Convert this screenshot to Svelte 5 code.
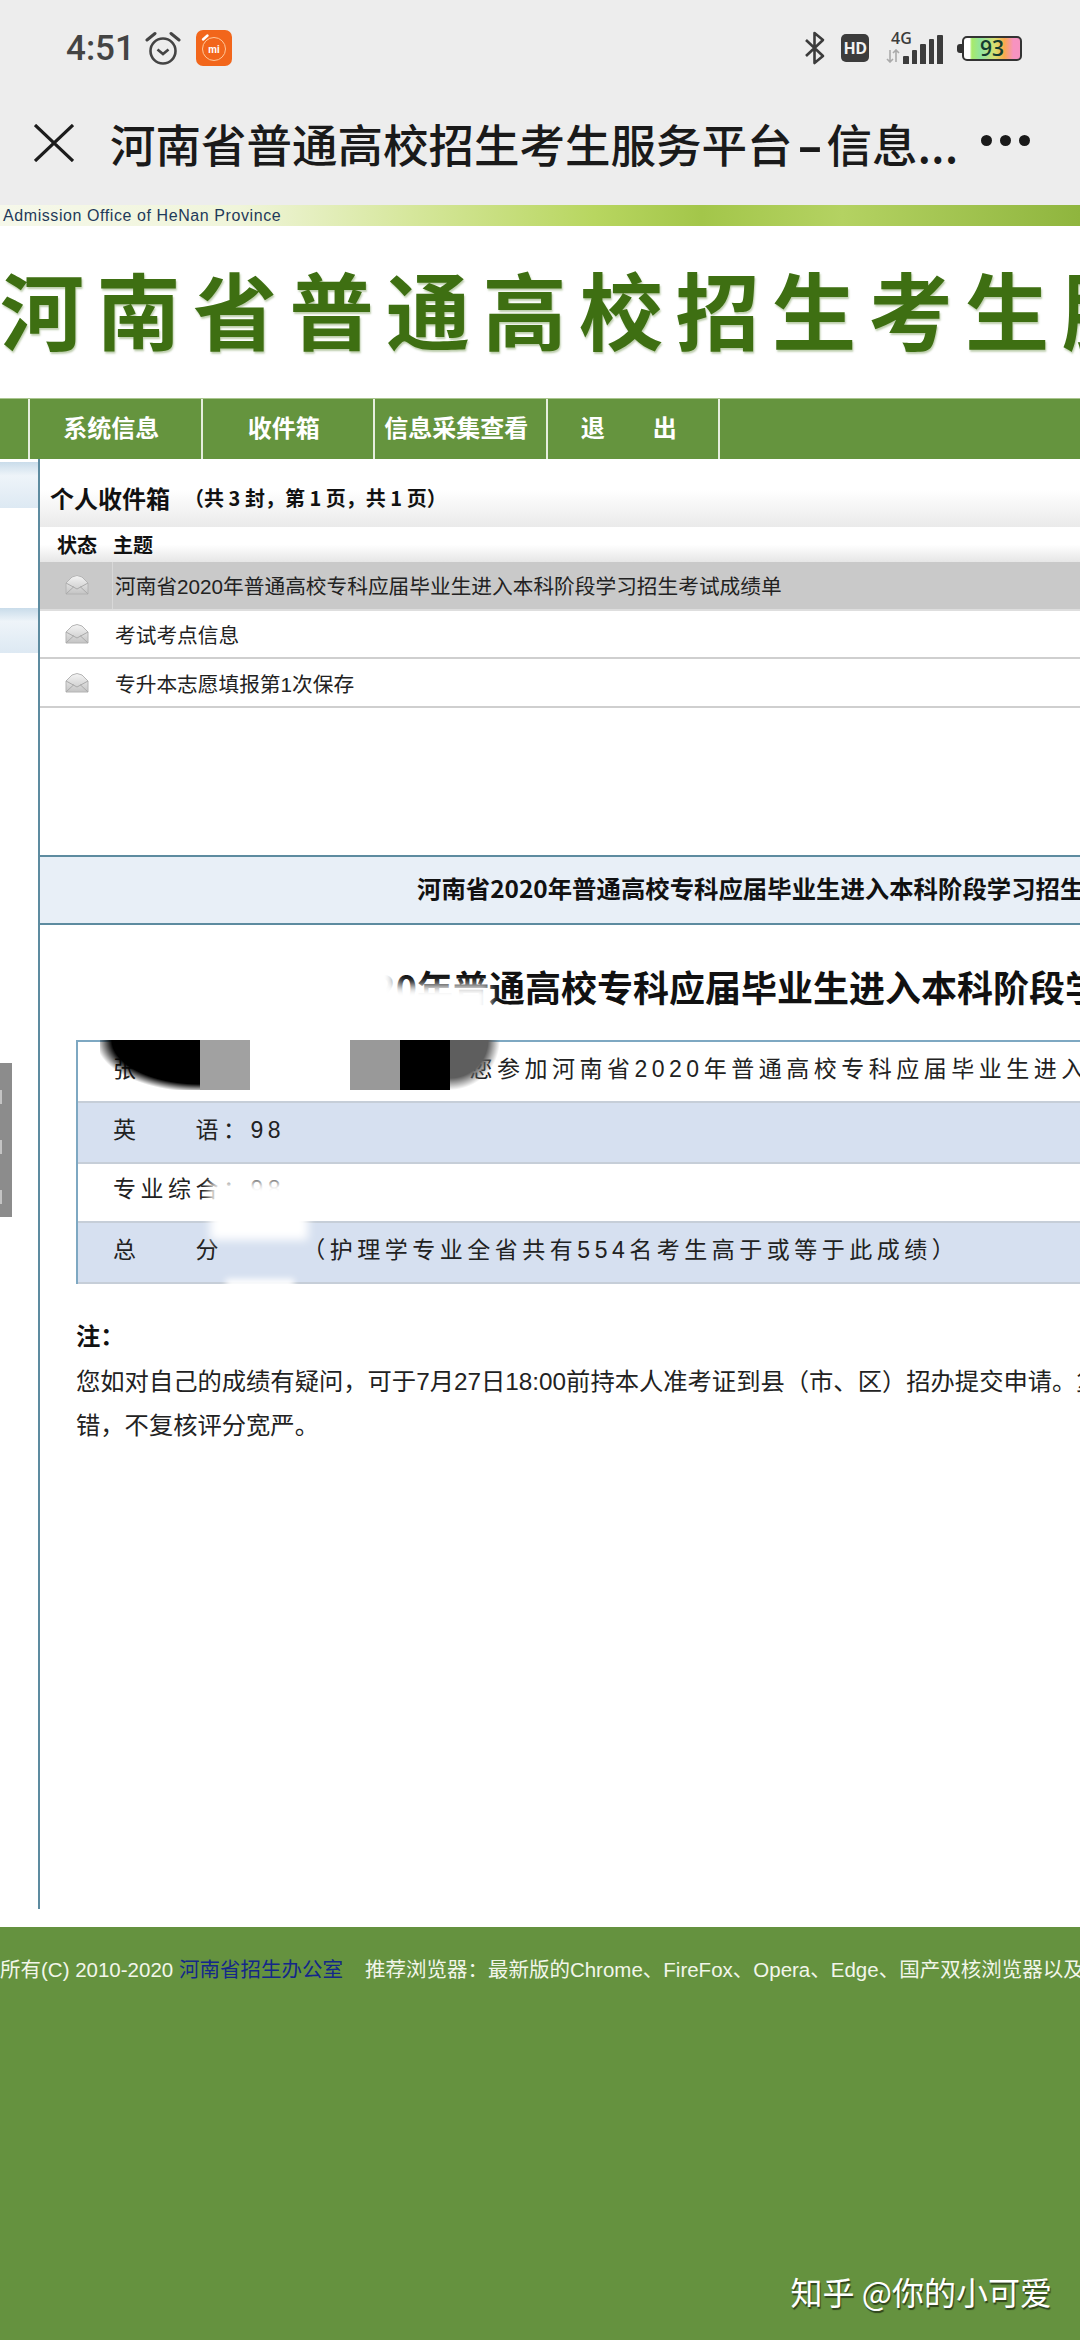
<script>
  const navItems = ["系统信息", "收件箱", "信息采集查看", "退\u3000\u3000出"];
  const mails = [
    { title: "河南省2020年普通高校专科应届毕业生进入本科阶段学习招生考试成绩单", active: true },
    { title: "考试考点信息", active: false },
    { title: "专升本志愿填报第1次保存", active: false }
  ];
  const censorCells = ["c-black-l", "c-grey", "c-white", "c-grey2", "c-black", "c-dark-r"];
  const bars = [8, 14, 20, 25, 29];
</script>

<div class="page">
  <div class="phone-top">
    <div class="status">
      <div class="status-left">
        <span class="time">4:51</span>
        <svg class="alarm" viewBox="0 0 36 34" width="36" height="34">
          <circle cx="18" cy="20" r="12.5" fill="none" stroke="#444" stroke-width="2.6" />
          <path d="M12.5 18.5 L18 23 L23.5 18.5" fill="none" stroke="#444" stroke-width="2.6" />
          <path d="M2 9 L10 2.5 M34 9 L26 2.5" stroke="#444" stroke-width="3" stroke-linecap="round" />
        </svg>
        <div class="mi">
          <svg viewBox="0 0 36 36" width="36" height="36">
            <circle cx="18" cy="19" r="11.5" fill="none" stroke="#ffc89a" stroke-width="1" />
            <path d="M7 9.5 L11.5 5.5" stroke="#fff" stroke-width="2.4" stroke-linecap="round" />
          </svg>
          <span class="mi-text">mi</span>
        </div>
      </div>
      <div class="status-right">
        <svg class="bt" viewBox="0 0 22 34" width="22" height="34">
          <path d="M2 9 L19 25 L10.5 32 V2 L19 9 L2 25" fill="none" stroke="#3c3c3c" stroke-width="2.6" stroke-linejoin="round" />
        </svg>
        <div class="hd">HD</div>
        <div class="signal">
          <span class="four-g">4G</span>
          <svg class="arrows" viewBox="0 0 14 14" width="14" height="14">
            <path d="M4 1 V13 M1 10 L4 13 L7 10 M10 13 V1 M7 4 L10 1 L13 4" fill="none" stroke="#aaa" stroke-width="1.6" />
          </svg>
          <div class="bars">
            {#each bars as h}
              <span class="bar" style="height: {h}px"></span>
            {/each}
          </div>
        </div>
        <div class="battery">
          <span class="tip"></span>
          <div class="cell"><span>93</span></div>
        </div>
      </div>
    </div>

    <div class="titlebar">
      <svg class="close" viewBox="0 0 40 38" width="40" height="38">
        <path d="M1 1 L39 37 M39 1 L1 37" stroke="#1c1c1c" stroke-width="3.2" />
      </svg>
      <span class="page-title">河南省普通高校招生考生服务平台<b class="dash">-</b>信息...</span>
      <div class="dots"><i></i><i></i><i></i></div>
    </div>
  </div>

  <div class="banner">Admission Office of HeNan Province</div>

  <div class="logo">河南省普通高校招生考生服务平台</div>

  <nav class="nav">
    <span class="nav-stub"></span>
    {#each navItems as item}
      <a class="nav-item" href="#top">{item}</a>
    {/each}
  </nav>

  <div class="body">
    <aside class="side">
      <div class="side-panel first"></div>
      <div class="side-panel second"></div>
    </aside>

    <main class="main">
      <div class="inbox-head">
        <span class="inbox-title">个人收件箱</span>
        <span class="inbox-count">&#xFF08;共 3 封&#xFF0C;第 1 页&#xFF0C;共 1 页&#xFF09;</span>
      </div>

      <div class="list-head">
        <span class="col-state">状态</span>
        <span>主题</span>
      </div>

      {#each mails as mail}
        <div class={mail.active ? "mail active" : "mail"}>
          <span class="mail-icon">
            <svg viewBox="0 0 24 20" width="24" height="20">
              <defs>
                <linearGradient id="env" x1="0" y1="0" x2="0" y2="1">
                  <stop offset="0" stop-color="#f4f4f4" />
                  <stop offset="1" stop-color="#c4c4c4" />
                </linearGradient>
              </defs>
              <path d="M1 8 L7 2 Q12 -1 17 2 L23 8 V19 H1 Z" fill="url(#env)" stroke="#b4b4b4" />
              <path d="M1 8 L12 14 L23 8 M1 19 L9 11.5 M23 19 L15 11.5" fill="none" stroke="#aaa" />
            </svg>
          </span>
          <span class="mail-title">{mail.title}</span>
        </div>
      {/each}

      <div class="detail-bar">河南省2020年普通高校专科应届毕业生进入本科阶段学习招生考试成绩单</div>

      <h2 class="heading">
        河南省2020年普通高校专科应届毕业生进入本科阶段学习招生考试成绩单
        <span class="wipe wipe-a"></span>
        <span class="wipe wipe-b"></span>
      </h2>

      <div class="score">
        <div class="score-row">张<span class="name-gap"></span>您参加河南省2020年普通高校专科应届毕业生进入本科阶段学习招生考试成绩如下</div>
        <div class="score-row tint">英&#x3000;&#x3000;语&#xFF1A;98</div>
        <div class="score-row short">专业综合&#xFF1A;98</div>
        <div class="score-row tint">总&#x3000;&#x3000;分&#xFF1A;196&#xFF08;护理学专业全省共有554名考生高于或等于此成绩&#xFF09;</div>

        <div class="censor">
          {#each censorCells as cell}
            <span class={cell}></span>
          {/each}
        </div>
        <span class="patch"></span>
        <span class="smudge"></span>
        <span class="smudge-low"></span>
      </div>

      <div class="note">
        <strong>注&#xFF1A;</strong>
        <p>您如对自己的成绩有疑问&#xFF0C;可于7月27日18:00前持本人准考证到县&#xFF08;市、区&#xFF09;招办提交申请。复核</p>
        <p>错&#xFF0C;不复核评分宽严。</p>
      </div>
    </main>
  </div>

  <footer class="footer">
    <p class="copy">所有(C) 2010-2020 <a href="#top">河南省招生办公室</a><span class="browsers">推荐浏览器&#xFF1A;最新版的Chrome、FireFox、Opera、Edge、国产双核浏览器以及IE</span></p>
    <div class="watermark">知乎 @你的小可爱</div>
  </footer>

  <div class="float-tab"><i></i><i></i><i></i></div>
</div>

<style>
  :global(body) {
    margin: 0;
    background: #fff;
  }

  .page {
    position: relative;
    width: 1080px;
    height: 2340px;
    overflow: hidden;
    font-family: "Liberation Sans", "Noto Sans CJK SC", sans-serif;
    color: #111;
    background: #fff;
  }

  .phone-top {
    background: #ededed;
    height: 205px;
    display: flex;
    flex-direction: column;
  }

  .status {
    height: 96px;
    display: flex;
    justify-content: space-between;
    align-items: center;
    padding: 0 58px 0 66px;
  }

  .status-left {
    display: flex;
    align-items: center;
    gap: 15px;
  }

  .time {
    font-family: Roboto, sans-serif;
    font-size: 35px;
    font-weight: 500;
    color: #444;
    width: 64px;
  }

  .mi {
    position: relative;
    width: 36px;
    height: 36px;
    border-radius: 7px;
    background: #f2661b;
  }

  .mi svg {
    display: block;
  }

  .mi-text {
    position: absolute;
    inset: 0;
    display: flex;
    align-items: center;
    justify-content: center;
    padding-top: 2px;
    font-family: Roboto, sans-serif;
    font-size: 10px;
    font-weight: 700;
    color: #fff;
  }

  .status-right {
    display: flex;
    align-items: center;
  }

  .bt {
    margin-right: 15px;
  }

  .hd {
    width: 28px;
    height: 28px;
    border-radius: 5px;
    background: #3c3c3c;
    color: #f2f2f2;
    font-family: "Open Sans", sans-serif;
    font-size: 16px;
    font-weight: 700;
    line-height: 28px;
    text-align: center;
    letter-spacing: -0.5px;
    margin-right: 17px;
  }

  .signal {
    position: relative;
    width: 57px;
    height: 32px;
    margin-right: 14px;
  }

  .four-g {
    position: absolute;
    left: 5px;
    top: -2px;
    font-family: "Open Sans", sans-serif;
    font-size: 16px;
    font-weight: 600;
    color: #3c3c3c;
    line-height: 16px;
  }

  .arrows {
    position: absolute;
    left: 0;
    bottom: 1px;
  }

  .bars {
    position: absolute;
    left: 17px;
    bottom: 0;
    display: flex;
    align-items: flex-end;
    gap: 3px;
  }

  .bar {
    width: 5.5px;
    background: #3c3c3c;
    border-radius: 1px 1px 0 0;
  }

  .battery {
    display: flex;
    align-items: center;
  }

  .tip {
    width: 5px;
    height: 9px;
    background: #333;
    border-radius: 3px 0 0 3px;
  }

  .cell {
    width: 60px;
    height: 25px;
    box-sizing: border-box;
    border: 2px solid #333;
    border-radius: 5px;
    background: linear-gradient(to right, #fff 0 10%, #a8ea6a 14%, #8fe5a0 30%, #d8e070 55%, #f9a94c 72%, #f793c0 88%);
    display: flex;
    align-items: center;
    justify-content: center;
    font-family: "Open Sans", sans-serif;
    font-size: 21px;
    font-weight: 600;
    color: #143c30;
  }

  .titlebar {
    position: relative;
    flex: 1;
    display: flex;
    align-items: center;
    padding: 0 0 15px 34px;
  }

  .page-title {
    margin-left: 36px;
    font-family: "Noto Sans CJK SC", sans-serif;
    font-size: 45.5px;
    font-weight: 500;
    color: #1a1a1a;
    white-space: nowrap;
  }

  .dash {
    display: inline-block;
    width: 34px;
    text-align: center;
    font-weight: 700;
    transform: scaleX(1.6);
  }

  .dots {
    position: absolute;
    left: 981px;
    top: 39px;
    display: flex;
    gap: 8px;
  }

  .dots i {
    width: 11px;
    height: 11px;
    border-radius: 50%;
    background: #1a1a1a;
  }

  .banner {
    height: 21px;
    padding-left: 3px;
    font-size: 16px;
    line-height: 21px;
    letter-spacing: 0.58px;
    color: #1f3a5a;
    white-space: nowrap;
    background: linear-gradient(to right, #f6f8ea 0, #f0f5da 22%, #d6e79c 38%, #b8d660 55%, #a3c64a 65%, #b4d262 78%, #8fb53e 100%);
  }

  .logo {
    height: 172px;
    box-sizing: border-box;
    padding-bottom: 8px;
    line-height: 164px;
    font-family: "Noto Sans CJK SC", sans-serif;
    font-size: 84px;
    font-weight: 700;
    letter-spacing: 12.5px;
    color: #3e6f12;
    white-space: nowrap;
    text-shadow: 1px 2px 2px rgba(62, 111, 18, 0.35);
  }

  .nav {
    height: 61px;
    background: #65943e;
    display: flex;
    box-sizing: border-box;
    border-top: 1px solid #a9c58f;
  }

  .nav-stub {
    width: 28px;
    border-right: 2px solid #e6eedd;
  }

  .nav-item {
    box-sizing: border-box;
    width: 172.5px;
    padding: 0 8px 6px 0;
    border-right: 2px solid #e6eedd;
    display: flex;
    align-items: center;
    justify-content: center;
    font-family: "Noto Sans CJK SC", sans-serif;
    font-size: 24px;
    font-weight: 700;
    color: #fff;
    text-decoration: none;
    white-space: nowrap;
  }

  .body {
    display: flex;
    height: 1450px;
  }

  .side {
    width: 38px;
    flex: none;
  }

  .side-panel {
    width: 38px;
    background: linear-gradient(to bottom, #c9dcea, #eef4f9 30%, #dde9f3);
  }

  .first {
    height: 46px;
    margin-top: 3px;
  }

  .second {
    height: 45px;
    margin-top: 100px;
  }

  .main {
    flex: 1;
    min-width: 0;
    border-left: 2px solid #5d8ba0;
  }

  .inbox-head {
    height: 68px;
    box-sizing: border-box;
    padding: 8px 0 0 10px;
    display: flex;
    align-items: center;
    gap: 14px;
    font-family: "Noto Sans CJK SC", sans-serif;
    font-weight: 700;
    background: linear-gradient(to bottom, #fff 45%, #eaeaea);
  }

  .inbox-title {
    font-size: 24px;
  }

  .inbox-count {
    font-size: 20px;
  }

  .list-head {
    height: 35px;
    display: flex;
    align-items: center;
    gap: 16px;
    padding-left: 17px;
    font-family: "Noto Sans CJK SC", sans-serif;
    font-size: 20px;
    font-weight: 700;
    background: linear-gradient(to bottom, #fff 50%, #e6e6e6);
  }

  .mail {
    height: 48.7px;
    box-sizing: border-box;
    display: flex;
    align-items: center;
    border-bottom: 2px solid #cfcfcf;
    background: #fff;
  }

  .mail.active {
    background: #c9c9c9;
    border-bottom-color: #dedede;
  }

  .mail-icon {
    width: 73px;
    box-sizing: border-box;
    padding-left: 25px;
    height: 100%;
    display: flex;
    align-items: center;
  }

  .mail.active .mail-icon {
    border-right: 1px solid #d8d8d8;
  }

  .mail-title {
    font-size: 20.7px;
    font-family: "Liberation Sans", "Noto Sans CJK SC", sans-serif;
    color: #222;
    padding-left: 2px;
    white-space: nowrap;
  }

  .detail-bar {
    margin-top: 147px;
    height: 70px;
    box-sizing: border-box;
    border-top: 2px solid #5d8ba0;
    border-bottom: 2px solid #5d8ba0;
    background: #e8eff7;
    padding-left: 377px;
    font-family: "Noto Sans CJK SC", sans-serif;
    font-size: 24.4px;
    font-weight: 700;
    line-height: 62px;
    white-space: nowrap;
  }

  .heading {
    position: relative;
    margin: 0;
    height: 115px;
    box-sizing: border-box;
    padding: 36px 0 0 184px;
    font-family: "Noto Sans CJK SC", sans-serif;
    font-size: 36px;
    font-weight: 700;
    line-height: 50px;
    white-space: nowrap;
  }

  .wipe {
    position: absolute;
    background: #fff;
    filter: blur(5px);
  }

  .wipe-a {
    left: 160px;
    top: 28px;
    width: 195px;
    height: 80px;
  }

  .wipe-b {
    left: 340px;
    top: 60px;
    width: 110px;
    height: 40px;
  }

  .score {
    position: relative;
    margin-left: 36px;
    border-top: 2px solid #7ea8c2;
    border-left: 2px solid #7ea8c2;
  }

  .score-row {
    height: 61px;
    box-sizing: border-box;
    padding: 0 0 10px 35px;
    display: flex;
    align-items: center;
    border-bottom: 2px solid #c6ced8;
    font-family: "Liberation Sans", "Noto Sans CJK SC", sans-serif;
    font-size: 23px;
    letter-spacing: 4.5px;
    color: #222;
    white-space: nowrap;
  }

  .score-row.short {
    height: 59px;
    padding-bottom: 12px;
  }

  .tint {
    background: #d6e0f0;
  }

  .name-gap {
    display: inline-block;
    width: 329px;
    flex: none;
  }

  .censor {
    position: absolute;
    left: 22px;
    top: -2px;
    width: 400px;
    height: 50px;
    display: flex;
  }

  .censor span {
    display: block;
    height: 100%;
  }

  .c-black-l {
    width: 100px;
    background: #000;
    mask-image: radial-gradient(ellipse 100% 100% at 100% 0, #000 88%, transparent 104%);
  }

  .c-grey {
    width: 50px;
    background: #a1a1a1;
  }

  .c-white {
    width: 100px;
    background: #fff;
  }

  .c-grey2 {
    width: 50px;
    background: #999;
  }

  .c-black {
    width: 50px;
    background: #000;
  }

  .c-dark-r {
    width: 50px;
    background: #5e5e5e;
    mask-image: radial-gradient(ellipse 100% 100% at 0 0, #000 76%, transparent 100%);
  }

  /* repainted score, the row colour stays under it */
  .patch {
    position: absolute;
    left: 148px;
    top: 190px;
    width: 76px;
    height: 47px;
    background: #d6e0f0;
  }

  .smudge {
    position: absolute;
    left: 132px;
    top: 139px;
    width: 98px;
    height: 59px;
    background: #fff;
    filter: blur(5px);
  }

  .smudge-low {
    position: absolute;
    left: 148px;
    top: 237px;
    width: 68px;
    height: 10px;
    background: #fff;
    filter: blur(3px);
  }

  .note {
    margin-left: 36px;
    padding-top: 33px;
    font-family: "Liberation Sans", "Noto Sans CJK SC", sans-serif;
    font-size: 24.3px;
    color: #222;
    white-space: nowrap;
  }

  .note strong {
    display: block;
    line-height: 36px;
    font-family: "Noto Sans CJK SC", sans-serif;
    color: #111;
  }

  .note p {
    margin: 0;
    line-height: 44px;
  }

  .note strong + p {
    margin-top: 7px;
  }

  .footer {
    position: relative;
    margin-top: 18px;
    height: 413px;
    background: #65923f;
    overflow: hidden;
  }

  .copy {
    margin: 0;
    padding-top: 28px;
    font-size: 20.5px;
    line-height: 30px;
    color: #f2f6ea;
    white-space: nowrap;
  }

  .copy a {
    color: #14278a;
    text-decoration: none;
  }

  .browsers {
    margin-left: 22px;
  }

  .watermark {
    position: absolute;
    right: 28px;
    bottom: 26px;
    font-family: "Noto Sans CJK SC", sans-serif;
    font-size: 32px;
    color: #fff;
    text-shadow: 1px 2px 1px rgba(0, 0, 0, 0.55);
    white-space: nowrap;
  }

  .float-tab {
    position: absolute;
    left: 0;
    top: 1063px;
    width: 12px;
    height: 154px;
    background: #8c8c8c;
    display: flex;
    flex-direction: column;
    gap: 36px;
    padding-top: 27px;
    box-sizing: border-box;
  }

  .float-tab i {
    width: 2px;
    height: 14px;
    background: #c4c4c4;
  }
</style>
